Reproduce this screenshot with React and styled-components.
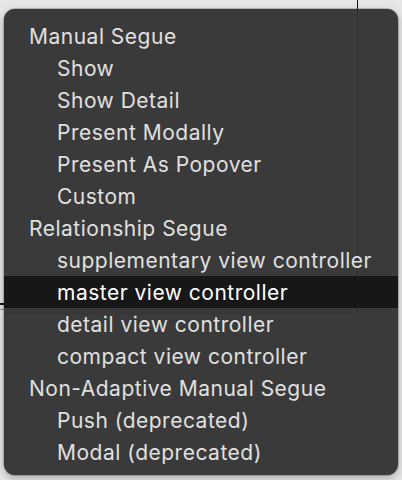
import React from "react";
import styled, { createGlobalStyle } from "styled-components";

const Global = createGlobalStyle`
  html, body {
    margin: 0;
    padding: 0;
    width: 402px;
    height: 480px;
    overflow: hidden;
  }
  body {
    background-color: #e6e6e6;
    background-image:
      linear-gradient(#111, #111),
      linear-gradient(#111, #111),
      linear-gradient(#9a9a9a, #9a9a9a);
    background-size: 1px 10px, 4px 2px, 4px 1px;
    background-position: 357px 0, 0 303px, 0 309px;
    background-repeat: no-repeat;
    font-family: Inter, "Noto Sans", "Liberation Sans", sans-serif;
  }
`;

const Page = styled.div`
  padding: 9px 4px 5px 4px;
`;

const Menu = styled.ul`
  list-style: none;
  margin: 0;
  box-sizing: border-box;
  width: 394px;
  height: 466px;
  padding: 11px 0 7px 0;
  border-radius: 11px;
  background-color: #3a3a3a;
  background-image:
    linear-gradient(rgba(0, 0, 0, 0.18), rgba(0, 0, 0, 0.18)),
    linear-gradient(rgba(0, 0, 0, 0.1), rgba(0, 0, 0, 0.1));
  background-size: 1px 304px, 353px 1px;
  background-position: 353px 0, 0 304px;
  background-repeat: no-repeat;
  box-shadow: 0 0 0 0.5px rgba(0, 0, 0, 0.35), 0 3px 8px rgba(0, 0, 0, 0.28);
  overflow: hidden;
`;

const Item = styled.li`
  height: 32px;
  line-height: 33px;
  padding-left: ${(p) => (p.$indent ? 53 : 25)}px;
  font-size: 21px;
  letter-spacing: 0.5px;
  white-space: nowrap;
  color: ${(p) => (p.$active ? "#ffffff" : "#e0e0e0")};
  background: ${(p) => (p.$active ? "#171717" : "transparent")};
`;

const items = [
  { label: "Manual Segue" },
  { label: "Show", indent: true },
  { label: "Show Detail", indent: true },
  { label: "Present Modally", indent: true },
  { label: "Present As Popover", indent: true },
  { label: "Custom", indent: true },
  { label: "Relationship Segue" },
  { label: "supplementary view controller", indent: true },
  { label: "master view controller", indent: true, active: true },
  { label: "detail view controller", indent: true },
  { label: "compact view controller", indent: true },
  { label: "Non-Adaptive Manual Segue" },
  { label: "Push (deprecated)", indent: true },
  { label: "Modal (deprecated)", indent: true },
];

export default function App() {
  return (
    <>
      <Global />
      <Page>
        <Menu>
          {items.map((it) => (
            <Item key={it.label} $indent={it.indent} $active={it.active}>
              {it.label}
            </Item>
          ))}
        </Menu>
      </Page>
    </>
  );
}
